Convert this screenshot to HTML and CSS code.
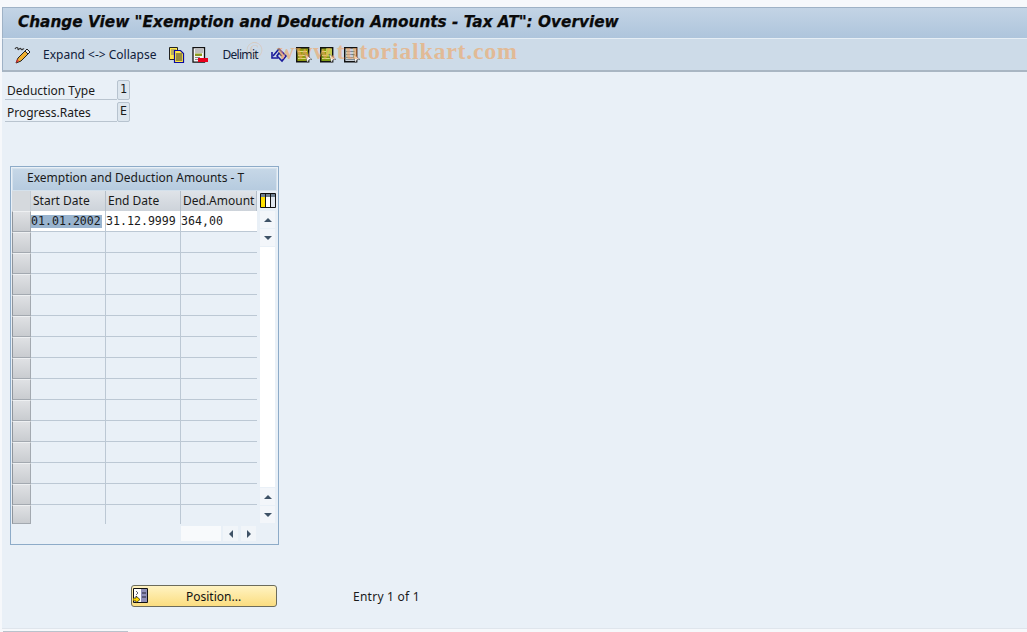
FILE: index.html
```html
<!DOCTYPE html>
<html lang="en">
<head>
<meta charset="utf-8">
<title>Change View</title>
<link rel="stylesheet" href="styles.css">
</head>
<body>
<div class="screen">
  <header class="titlebar"><h1>Change View "Exemption and Deduction Amounts - Tax AT": Overview</h1></header>
  <div class="toolbar">
    <svg class="tool-pen" width="18" height="18" viewBox="0 0 18 18"><path d="M1 3c1-2 3-2 3 0s2-2 3 0 2-1 3 0" fill="none" stroke="#333" stroke-width="1.2"/><path d="M13 3l3 3-9 9-5 2 2-5z" fill="#f0b030" stroke="#222"/><path d="M3 13l2 2-3 2z" fill="#d33"/><path d="M13 3l3 3-2 2-3-3z" fill="#e8e8e8" stroke="#222"/></svg>
    <span class="tool-text expand">Expand &lt;-&gt; Collapse</span>
    <svg class="tool-copy" width="16" height="16" viewBox="0 0 16 16"><path d="M.5.5h8v12h-8z" fill="#ffe84a" stroke="#222"/><path d="M2 3h5M2 5h5M2 7h5" stroke="#777"/><path d="M5.5 3.5h6l3 3v9h-9z" fill="#ffe84a" stroke="#0a0aa0" stroke-width="1.2"/><path d="M7 7h6M7 9h6M7 11h6M7 13h6" stroke="#333"/></svg>
    <svg class="tool-del" width="16" height="16" viewBox="0 0 16 16"><path d="M1 .7h11.5v14.5H1z" fill="#f4f4f4" stroke="#111" stroke-width="1.3"/><path d="M3 3h8M3 5h8" stroke="#888"/><path d="M3 6.5h7v2.5H3z" fill="#8a9a20"/><path d="M3 10.500h5M3 12.500h5" stroke="#888"/><path d="M6 11h10v4H6z" fill="#e8001c"/></svg>
    <span class="tool-text delimit">Delimit</span>
    <svg class="tool-undo" width="17" height="16" viewBox="0 0 17 16"><path d="M2 9l6-7 7 7-4 5-5-5 2-3 3 3" fill="none" stroke="#1a1a9a" stroke-width="1.6"/><path d="M1 5v6h6" fill="none" stroke="#1a1a9a" stroke-width="1.6"/><path d="M8 4l4 5-1 2" fill="none" stroke="#f0a0a0"/></svg>
    <svg class="tool-sel" width="16" height="16" viewBox="0 0 16 16"><path d="M.7.7h12v14H.7z" fill="#8f9a10" stroke="#111" stroke-width="1.4"/><path d="M2 4.500h9M2 8.500h9M2 11.500h9" stroke="#d8dc80"/><path d="M9 7l7 5.500h-3L11.500 16z" fill="#fff" stroke="#444" stroke-width=".5"/></svg>
    <svg class="tool-sel" width="16" height="16" viewBox="0 0 16 16"><path d="M.7.7h12v14H.7z" fill="#7f9a14" stroke="#111" stroke-width="1.4"/><path d="M6 1.500h6v8H6z" fill="#c4cc50"/><path d="M2 4.500h4M2 8.500h4M2 11.500h9" stroke="#d8dc80"/><path d="M9 7l7 5.500h-3L11.500 16z" fill="#fff" stroke="#444" stroke-width=".5"/></svg>
    <svg class="tool-sel" width="16" height="16" viewBox="0 0 16 16"><path d="M.7.7h12v14H.7z" fill="#c8d0d8" stroke="#111" stroke-width="1.4"/><path d="M2 4.500h9M2 7.500h9M2 10.500h9M2 12.500h9" stroke="#7f8c98"/><path d="M9 7l7 5.500h-3L11.500 16z" fill="#fff" stroke="#444" stroke-width=".5"/></svg>
  </div>
  <main class="content">
    <div class="fields">
      <div class="field"><span class="field-label">Deduction Type</span><span class="field-value">1</span></div>
      <div class="field"><span class="field-label">Progress.Rates</span><span class="field-value">E</span></div>
    </div>
    <section class="tc">
      <div class="tc-title">Exemption and Deduction Amounts - T</div>
      <div class="tc-body">
        <div class="selectors">
          <div class="sel-corner"></div>
          <div class="sel"></div><div class="sel"></div><div class="sel"></div><div class="sel"></div><div class="sel"></div>
          <div class="sel"></div><div class="sel"></div><div class="sel"></div><div class="sel"></div><div class="sel"></div>
          <div class="sel"></div><div class="sel"></div><div class="sel"></div><div class="sel"></div><div class="sel"></div>
        </div>
        <div class="grid">
          <div class="head">Start Date</div><div class="head">End Date</div><div class="head">Ded.Amount</div>
          <div class="cell first"><span class="hl">01.01.2002</span></div><div class="cell first">31.12.9999</div><div class="cell first">364,00</div>
          <div class="cell"></div><div class="cell"></div><div class="cell"></div>
          <div class="cell"></div><div class="cell"></div><div class="cell"></div>
          <div class="cell"></div><div class="cell"></div><div class="cell"></div>
          <div class="cell"></div><div class="cell"></div><div class="cell"></div>
          <div class="cell"></div><div class="cell"></div><div class="cell"></div>
          <div class="cell"></div><div class="cell"></div><div class="cell"></div>
          <div class="cell"></div><div class="cell"></div><div class="cell"></div>
          <div class="cell"></div><div class="cell"></div><div class="cell"></div>
          <div class="cell"></div><div class="cell"></div><div class="cell"></div>
          <div class="cell"></div><div class="cell"></div><div class="cell"></div>
          <div class="cell"></div><div class="cell"></div><div class="cell"></div>
          <div class="cell"></div><div class="cell"></div><div class="cell"></div>
          <div class="cell"></div><div class="cell"></div><div class="cell"></div>
          <div class="cell"></div><div class="cell"></div><div class="cell"></div>
        </div>
        <div class="vscroll">
          <svg class="config" width="16" height="15" viewBox="0 0 16 15"><path d="M.5.500h15v14H.500z" fill="#fff" stroke="#111"/><path d="M1 1h14v3H1z" fill="#6f7f8f"/><path d="M1 4h4.500v10H1z" fill="#ffe000"/><path d="M6 4h4v10H6z" fill="#fff"/><path d="M11 4h4v10h-4z" fill="#dfe6ee"/><path d="M5.500 1v13M10.500 1v13" stroke="#111"/></svg>
          <div class="sb-btn"><i class="up"></i></div>
          <div class="sb-btn"><i class="down"></i></div>
          <div class="sb-track"></div>
          <div class="sb-btn"><i class="up"></i></div>
          <div class="sb-btn"><i class="down"></i></div>
        </div>
      </div>
      <div class="hscroll">
        <div class="hs-track"></div>
        <div class="hs-btn"><i class="left"></i></div>
        <div class="hs-btn"><i class="right"></i></div>
      </div>
    </section>
    <div class="actions">
      <button class="position" type="button">
        <svg class="pos-icon" width="16" height="16" viewBox="0 0 16 16"><path d="M.5.500h14v14H.500z" fill="#fff" stroke="#111"/><path d="M8 1h6v13H8z" fill="#8e8eb8"/><path d="M9 5h4M9 9h4" stroke="#223"/><path d="M3 3l2 2-2 2" fill="none" stroke="#667"/><path d="M0 10h3V8l4 3.500L3 15v-2H0z" fill="#ffd800" stroke="#111" stroke-width=".7"/></svg>
        <span>Position...</span>
      </button>
      <span class="entry">Entry 1 of 1</span>
    </div>
  </main>
  <div class="watermark">www.tutorialkart.com</div>
  <div class="copyright">©</div>
  <div class="statusbar"></div>
</div>
</body>
</html>
```
FILE: styles.css
```css
* { box-sizing: border-box; }
html, body { margin: 0; padding: 0; background: #fff; }
body { width: 1027px; height: 632px; overflow: hidden; font-family: "Noto Sans", sans-serif; font-size: 12px; color: #1a1a1a; }
.screen { position: relative; height: 632px; padding: 7px 0 0 2px; display: flex; flex-direction: column; background: #f6f8fb; }
.titlebar { height: 31px; background: linear-gradient(#c3d4e5, #aec5dc); border-top: 1px solid #9fb2c6; border-left: 1px solid #9fb2c6; display: flex; align-items: center; padding: 0 0 2px 15px; }
.titlebar h1 { margin: 0; font: italic bold 15.3px "DejaVu Sans", sans-serif; color: #0a0a0a; white-space: nowrap; -webkit-text-stroke: .25px #0a0a0a; }
.toolbar { height: 34px; background: #cddbe8; border-top: 1px solid #e6eef5; border-bottom: 2px solid #a9b6c3; border-left: 1px solid #9fb2c6; display: flex; align-items: center; padding-left: 11px; }
.tool-text { white-space: nowrap; color: #10203a; }
.expand { margin-left: 11px; }
.tool-copy { margin-left: 13px; }
.tool-del { margin-left: 7px; }
.delimit { margin-left: 14px; letter-spacing: -.7px; }
.tool-undo { margin-left: 13px; }
.tool-sel { margin-left: 8px; }
.content { flex: 0 0 557px; background: #e9f0f7; padding: 8px 0 0 2px; border-bottom: 1px solid #dfe5ec; display: flex; flex-direction: column; }
.fields { display: flex; flex-direction: column; gap: 2px; margin-left: 1px; }
.field { display: flex; height: 20px; }
.field-label { width: 112px; padding: 2px 0 0 2px; border-bottom: 1px solid #b9c4cf; white-space: nowrap; }
.field-value { width: 13px; height: 20px; background: #dde6ee; border: 1px solid #b7c3cf; border-radius: 2px; font: 11.6px "DejaVu Sans Mono", monospace; text-align: center; line-height: 17px; }
.tc { width: 269px; height: 379px; margin: 44px 0 0 6px; border: 1px solid #8dabc8; padding: 1px; display: flex; flex-direction: column; }
.tc-title { height: 23px; background: linear-gradient(#c6d7e7, #b6cbdf); border: 1px solid #d4e1ec; padding-left: 14px; line-height: 17px; white-space: nowrap; }
.tc-body { display: flex; height: 333px; }
.selectors { width: 19px; display: flex; flex-direction: column; }
.sel-corner { height: 20px; background: #d5d9dd; border-right: 1px solid #c4cdd6; }
.sel { height: 21px; background: linear-gradient(#dfe1e4, #c9ccd0); border: 1px solid #a3a9b0; border-top-color: #eef0f2; border-left-color: #8f959c; }
.sel:last-child { height: 19px; }
.grid { width: 226px; display: grid; grid-template-columns: 75px 75px 76px; grid-template-rows: 20px repeat(14, 21px) 19px; align-content: start; }
.head { background: linear-gradient(#dfe3e8, #cdd3da); border-right: 1px solid #b5bfc9; padding-left: 2px; line-height: 20px; white-space: nowrap; }
.cell { border-right: 1px solid #bcc8d4; border-bottom: 1px solid #bcc8d4; font: 11.6px "DejaVu Sans Mono", monospace; line-height: 20px; white-space: nowrap; }
.cell:nth-child(3n) { border-right: 0; }
.cell:nth-last-child(-n+3) { border-bottom: 0; }
.cell.first { background: #fff; }
.hl { display: inline-block; vertical-align: middle; width: 71px; height: 13px; line-height: 13px; background: #99b4cf; }
.vscroll { width: 18px; margin-left: 2px; display: flex; flex-direction: column; align-items: flex-start; padding-left: 1px; }
.config { flex: none; margin: 2px 0 3px; }
.sb-btn { width: 15px; height: 17px; margin-bottom: 1px; background: #f3f6fa; display: flex; align-items: center; justify-content: center; }
.sb-track { width: 15px; height: 240px; margin-bottom: 1px; background: #fff; }
.up, .down, .left, .right { display: block; width: 0; height: 0; border: 4px solid transparent; }
.up { border-top: 0; border-bottom: 4px solid #3f5266; }
.down { border-bottom: 0; border-top: 4px solid #3f5266; }
.left { border-left: 0; border-right: 4px solid #3f5266; }
.right { border-right: 0; border-left: 4px solid #3f5266; }
.hscroll { display: flex; height: 15px; margin: 2px 0 0 169px; gap: 2px; }
.hs-track { width: 40px; background: #f8fafc; }
.hs-btn { width: 15px; background: #f1f5f9; display: flex; align-items: center; justify-content: center; }
.hs-btn + .hs-btn { margin-left: 1px; }
.actions { display: flex; align-items: center; height: 22px; margin: 40px 0 0 127px; }
.position { width: 146px; height: 22px; padding: 0; background: linear-gradient(#fff3c2, #fbdd80); border: 1px solid #6c6c5c; border-radius: 3px; display: flex; align-items: center; font: 12px "Noto Sans", sans-serif; color: #111; position: relative; }
.pos-icon { margin-left: 1px; }
.position span { margin-left: 37px; }
.entry { margin-left: 76px; letter-spacing: .25px; }
.statusbar { position: absolute; left: 3px; bottom: 0; width: 125px; height: 1px; background: #b9c2cc; }
.watermark { position: absolute; left: 277px; top: 38px; font: bold 24px "Liberation Serif", serif; letter-spacing: .7px; color: rgba(240, 165, 95, .6); white-space: nowrap; }
.copyright { position: absolute; left: 246px; top: 38px; font: 23px "Liberation Serif", serif; color: rgba(240, 165, 95, .3); }
```
